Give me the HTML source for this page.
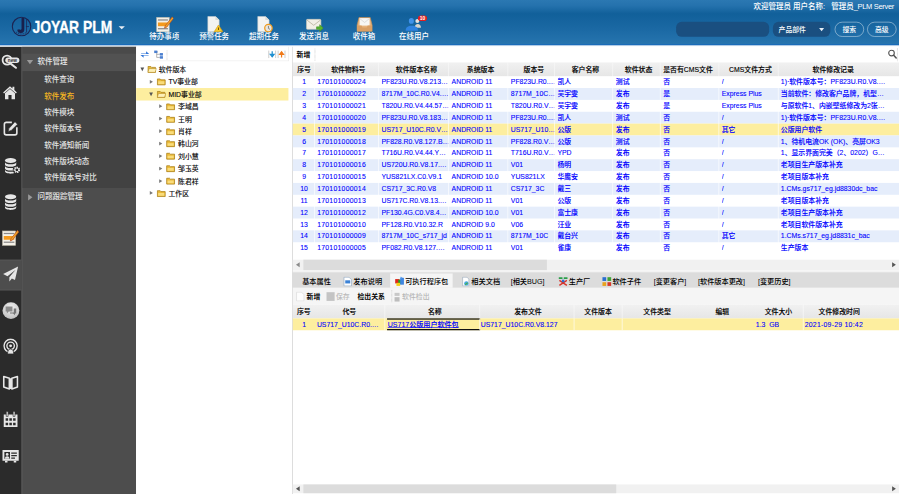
<!DOCTYPE html><html lang="zh-CN"><head><meta charset="utf-8"><title>JOYAR PLM</title><style>
*{box-sizing:border-box}
html,body{margin:0;padding:0;width:899px;height:494px;overflow:hidden;background:#fff}
#app{position:absolute;left:0;top:0;width:1440px;height:792px;transform:scale(0.624306);transform-origin:0 0;overflow:hidden;background:#fff;
 font-family:"Liberation Sans","Noto Sans CJK SC",sans-serif;font-size:12px;color:#000;font-weight:500}
.abs{position:absolute}
#hdr{position:absolute;left:0;top:0;width:1440px;height:73px;
 background:linear-gradient(to bottom,#2b78b2 0,#2572ad 9px,#11609a 22px,#1a68a3 45px,#2674ae 70px,#1a6bb8 70px,#1a6bb8 73px)}
#gap{position:absolute;left:0;top:73px;width:1440px;height:2px;background:#f7fafd}
#brand{position:absolute;left:52px;top:27px;-webkit-text-stroke:.5px #fff;height:34px;line-height:34px;font-size:27px;font-weight:bold;color:#fff;white-space:nowrap;transform:scaleX(.825);transform-origin:0 50%}
.tb{position:absolute;top:24px;width:80px;height:46px;color:#fff;text-align:center}
.tb svg{position:absolute;left:27px;top:2px}
.tb span{position:absolute;left:0;width:80px;top:28px;line-height:14px;font-size:12px}
#user{position:absolute;right:8px;top:3px;height:16px;line-height:16px;color:#fff;font-size:12px;white-space:nowrap}
.pill{position:absolute;top:35px;height:24px;border-radius:9px;background:#1a4f80}
.btn{position:absolute;top:35px;height:24px;width:47px;border-radius:12px;border:1px solid rgba(255,255,255,.65);color:#fff;text-align:center;line-height:22px;font-size:11px}
#icons{position:absolute;left:0;top:75px;width:35px;height:720px;background:#2b2b2b}
#menu{position:absolute;left:35px;top:75px;width:183px;height:720px;background:#4d4d4d;border-left:1px solid #5a5a5a;color:#e8e8e8}
.mh{position:absolute;left:0;width:182px;height:26px;line-height:25px;background:#525252;font-size:12px}
.mh i{position:absolute;left:7px;top:10px;width:0;height:0}
.mh span{position:absolute;left:24px}
.mi{position:absolute;left:35px;height:26px;line-height:26px;font-size:12px;white-space:nowrap}
#tree{position:absolute;left:218px;top:75px;width:245px;height:720px;background:#fff;font-size:11px;-webkit-text-stroke:.2px #000}
.tr{position:absolute;left:0;width:244px;height:20px;line-height:20px;white-space:nowrap}
.tr b{font-weight:normal;position:absolute;top:0}
.arr{position:absolute;width:0;height:0}
#main{position:absolute;left:468px;top:75px;width:972px;height:720px;background:#fff;border-left:1px solid #c9c9c9}
.gh{position:absolute;left:0;width:971px;height:22px;background:linear-gradient(#f1f1f1,#e6e6e6);font-size:11px;-webkit-text-stroke:.2px #000}
.gh span{position:absolute;top:0;width:140px;line-height:22px;text-align:center;white-space:nowrap}
.row{position:absolute;left:0;width:971px;height:19px;line-height:19px;font-size:11px;color:#0000ff;white-space:nowrap;-webkit-text-stroke:.15px #0000ff}
.row.alt{background:#e5edfb}
.row.sel{background:#fdee9f}
.row span{position:absolute;top:0;height:19px;overflow:hidden;text-overflow:ellipsis;white-space:nowrap}
.num{letter-spacing:.4px}
.sb{position:absolute;background:#f1f1f1}
.sb i{position:absolute;background:#dcdcdc}
.tab{position:absolute;top:0;height:25px;line-height:25px;font-size:11.5px;white-space:nowrap}
</style></head><body><div id="app">
<div id="hdr">
<svg class="abs" style="left:18px;top:26px" width="33" height="33" viewBox="0 0 33 33"><circle cx="16.5" cy="16.5" r="14.8" fill="none" stroke="#1c2452" stroke-width="1.8"/><path d="M16.5 3h4.400v18a5.600 5.600 0 0 1-11.200.6l3.200-.7a2.300 2.300 0 0 0 3.600-.5z" fill="#18204c"/><path d="M23.500 16.500h5M24.500 5v21" stroke="#1c2452" stroke-width="1.200" fill="none"/><path d="M8 25.5q8.500 6 17 0" stroke="#1c2452" stroke-width="1.6" stroke-dasharray="1.5 1.5" fill="none"/></svg>
<div id="brand">JOYAR PLM</div>
<div class="arr" style="left:190px;top:42px;border-left:5px solid transparent;border-right:5px solid transparent;border-top:5px solid #e8eef5"></div>
<div class="tb" style="left:223px"><svg width="28" height="26" viewBox="0 0 28 26"><rect x="1" y="2" width="20" height="23" fill="#f4f1e8" stroke="#c9c4b4" stroke-width="1"/><rect x="3" y="10" width="16" height="6" fill="#f39a1e"/><rect x="3" y="5" width="16" height="2" fill="#8a8a8a"/><rect x="3" y="19" width="16" height="2" fill="#8a8a8a"/><path d="M26 1l2 2.500-11 14-3.500 1.500 1-3.500z" fill="#f0a52a" stroke="#b5461a" stroke-width="1"/></svg><span>待办事项</span></div>
<div class="tb" style="left:303px"><svg width="28" height="26" viewBox="0 0 28 26"><path d="M3 0h12l6 6v19H3z" fill="#f3f3f1" stroke="#d5d5d0" stroke-width="1"/><path d="M15 0v6h6z" fill="#dcdcd8"/><path d="M20 14l7 11H13z" fill="#f7c92c" stroke="#d79b10" stroke-width="1"/><rect x="19.300" y="18" width="1.500" height="4" fill="#6b4a00"/></svg><span>预警任务</span></div>
<div class="tb" style="left:383px"><svg width="28" height="26" viewBox="0 0 28 26"><path d="M3 0h12l6 6v19H3z" fill="#f3f3f1" stroke="#d5d5d0" stroke-width="1"/><path d="M15 0v6h6z" fill="#dcdcd8"/><circle cx="20" cy="19" r="6" fill="#e8e6e0" stroke="#f09a1c" stroke-width="2"/><path d="M20 15.500v4l2.500 1.500" stroke="#666" stroke-width="1.200" fill="none"/></svg><span>超期任务</span></div>
<div class="tb" style="left:463px"><svg width="28" height="26" viewBox="0 0 28 26"><rect x="1" y="5" width="23" height="16" rx="1.500" fill="#f2efe6" stroke="#cfc9b8" stroke-width="1"/><path d="M1.500 6l11 8.500 11-8.500" fill="none" stroke="#b9b29e" stroke-width="1.300"/><path d="M17 17h5v-3.500l6 5.500-6 5.500V21h-5z" fill="#58b431" stroke="#3d8a1d" stroke-width=".8"/></svg><span>发送消息</span></div>
<div class="tb" style="left:543px"><svg width="28" height="26" viewBox="0 0 28 26"><path d="M5 2h18l3 12v10H2V14z" fill="#e7b47d" stroke="#c78f55" stroke-width="1"/><rect x="6" y="3" width="16" height="12" fill="#f7f7f5"/><path d="M6.500 4l7.500 6 7.500-6" fill="none" stroke="#cfcfcf" stroke-width="1"/><path d="M2 15h7l1.500 3h7l1.500-3h7v9H2z" fill="#d9a066"/></svg><span>收件箱</span></div>
<div class="tb" style="left:623px"><svg width="36" height="28" viewBox="0 0 36 28" style="overflow:visible"><ellipse cx="18.500" cy="7.700" rx="3.200" ry="3.300" fill="#e6e3de"/><path d="M14.300 18.500c0-4.500 2-6.200 4.900-6.200s5 1.700 5 6.200z" fill="#d8d4cc"/><ellipse cx="8.900" cy="7.600" rx="4" ry="4.600" fill="#3f92ea"/><path d="M-.2 23.200c0-5.500 3.500-7.800 9.800-7.800s9.900 2.300 9.900 7.800z" fill="#2f83e0"/><rect x="19.500" y="-1.200" width="14.500" height="9" rx="4.500" fill="#e21f1f"/><text x="26.800" y="6" font-size="8" font-weight="bold" fill="#fff" text-anchor="middle" font-family="Liberation Sans,sans-serif">10</text></svg><span>在线用户</span></div>
<div id="user">欢迎管理员&nbsp;用户名称:&nbsp;&nbsp;&nbsp;管理员<span style="letter-spacing:-.5px">_PLM Server</span></div>
<div class="pill" style="left:1083px;width:149px"></div>
<div class="pill" style="left:1238px;width:92px;color:#fff;line-height:24px;font-size:11px;padding-left:9px">产品部件<div class="arr" style="left:74px;top:10px;border-left:4px solid transparent;border-right:4px solid transparent;border-top:5px solid #e8eef5"></div></div>
<div class="btn" style="left:1337px">搜索</div><div class="btn" style="left:1389px">高级</div>
</div><div id="gap"></div>
<div id="icons">
<div class="abs" style="left:0;top:341px;width:35px;height:49px;background:#4d4d4d;border-top:1px solid #5c5c5c;border-bottom:1px solid #5c5c5c"></div>
<svg class="abs" style="left:2px;top:9px" width="32" height="28" viewBox="0 0 32 28"><circle cx="9.300" cy="12.300" r="7.200" fill="none" stroke="#e6e6e6" stroke-width="3"/><path d="M15 18l8.500 6.500" stroke="#e6e6e6" stroke-width="3.400" stroke-linecap="round"/><rect x="6.500" y="8.200" width="22.500" height="8.800" rx="4.400" fill="#e6e6e6"/><text x="17.800" y="15" font-size="7.500" font-weight="bold" text-anchor="middle" fill="#2b2b2b" font-family="Liberation Sans,sans-serif">new</text></svg>
<svg class="abs" style="left:3px;top:60px" width="26" height="26" viewBox="0 0 26 26"><path d="M2 13L13 3l4 3.600V4h3v5.300L24 13l-1.500 1.800L13 6.200 3.500 14.800z" fill="#e6e6e6"/><path d="M5 14.500l8-7 8 7V24h-5.500v-7h-5v7H5z" fill="#e6e6e6"/></svg>
<svg class="abs" style="left:4px;top:118px" width="26" height="26" viewBox="0 0 26 26"><path d="M15 3H6a3 3 0 0 0-3 3v14a3 3 0 0 0 3 3h14a3 3 0 0 0 3-3v-9" fill="none" stroke="#e6e6e6" stroke-width="2.600"/><path d="M20 2l4 4-10 10-5 1.500 1.500-5z" fill="#e6e6e6" stroke="#2b2b2b" stroke-width="1"/></svg>
<svg class="abs" style="left:6px;top:177px" width="28" height="28" viewBox="0 0 28 28"><ellipse cx="11" cy="5" rx="9" ry="4" fill="#e6e6e6"/><path d="M2 7.500c0 5 18 5 18 0v4c0 5-18 5-18 0z" fill="#e6e6e6"/><path d="M2 13.500c0 5 18 5 18 0v4c0 5-18 5-18 0z" fill="#e6e6e6"/><path d="M2 19.500c0 5 18 5 18 0v3c0 5-18 5-18 0z" fill="#e6e6e6"/><circle cx="21" cy="20" r="6.500" fill="#2b2b2b"/><circle cx="21" cy="20" r="4" fill="none" stroke="#e6e6e6" stroke-width="2.400" stroke-dasharray="2.200 1.400"/><circle cx="21" cy="20" r="3" fill="none" stroke="#e6e6e6" stroke-width="1.600"/></svg>
<svg class="abs" style="left:4px;top:235px" width="26" height="28" viewBox="0 0 26 28"><ellipse cx="13" cy="5" rx="9" ry="4" fill="#e6e6e6"/><path d="M4 7.500c0 5 18 5 18 0v4c0 5-18 5-18 0z" fill="#e6e6e6"/><path d="M4 13.500c0 5 18 5 18 0v4c0 5-18 5-18 0z" fill="#e6e6e6"/><path d="M4 19.500c0 5 18 5 18 0v3c0 5-18 5-18 0z" fill="#e6e6e6"/></svg>
<svg class="abs" style="left:3px;top:293px" width="28" height="26" viewBox="0 0 28 26"><rect x="1" y="2" width="21" height="23" fill="#f4f1e8" stroke="#bdb8a8" stroke-width="1"/><rect x="3" y="10" width="17" height="6" fill="#f39a1e"/><rect x="3" y="5" width="17" height="2" fill="#8a8a8a"/><rect x="3" y="19" width="17" height="2" fill="#8a8a8a"/><path d="M25 1l2 2.500-10 13-3.500 1.500 1-3.500z" fill="#f0a52a" stroke="#b5461a" stroke-width="1"/></svg>
<svg class="abs" style="left:4px;top:351px" width="26" height="26" viewBox="0 0 26 26"><path d="M25 1L1 13l7 3.500L21 6 11 18v7l4-5 5 2.500z" fill="#e6e6e6"/></svg>
<svg class="abs" style="left:3px;top:408px" width="29" height="29" viewBox="0 0 29 29"><defs><radialGradient id="g8" cx=".5" cy=".35" r=".7"><stop offset="0" stop-color="#f4f4f4"/><stop offset="1" stop-color="#bdbdbd"/></radialGradient></defs><circle cx="14.500" cy="14.500" r="13.500" fill="url(#g8)"/><path d="M6 8h11v8h-6l-3 3v-3H6z" fill="#8a8a8a"/><path d="M19 11h4v8h-2v3l-3-3h-5v-1.500h6z" fill="#777"/></svg>
<svg class="abs" style="left:4px;top:467px" width="26" height="26" viewBox="0 0 26 26"><circle cx="13" cy="12" r="10.500" fill="none" stroke="#e6e6e6" stroke-width="2.200"/><circle cx="13" cy="12" r="6" fill="none" stroke="#e6e6e6" stroke-width="2.200"/><circle cx="13" cy="12" r="2.300" fill="#e6e6e6"/><path d="M8 25c0-5 2-8 5-8s5 3 5 8z" fill="#e6e6e6" stroke="#2b2b2b" stroke-width="1.200"/></svg>
<svg class="abs" style="left:4px;top:524px" width="26" height="28" viewBox="0 0 26 28"><path d="M2 4l9 3v17l-9-3zM24 4l-9 3v17l9-3z" fill="none" stroke="#e6e6e6" stroke-width="2.600" stroke-linejoin="round"/><path d="M11 7h4v17h-4z" fill="#e6e6e6"/></svg>
<svg class="abs" style="left:4px;top:583px" width="26" height="28" viewBox="0 0 26 28"><path d="M2 6h22v20H2z" fill="#e6e6e6"/><path d="M6 1h3v8H6zM17 1h3v8h-3z" fill="#e6e6e6" stroke="#2b2b2b" stroke-width="1"/><path d="M5 12h4v4H5zM11 12h4v4h-4zM17 12h4v4h-4zM5 19h4v4H5zM11 19h4v4h-4zM17 19h4v4h-4z" fill="#2b2b2b"/></svg>
<svg class="abs" style="left:3px;top:642px" width="28" height="26" viewBox="0 0 28 26"><path d="M1 4h26v17H1z" fill="#e6e6e6"/><path d="M4 7h9v11H4z" fill="#2b2b2b"/><circle cx="8.500" cy="11" r="2.200" fill="#e6e6e6"/><path d="M5 18c0-3 1.500-4 3.500-4s3.500 1 3.500 4z" fill="#e6e6e6"/><path d="M15 8h9v2h-9zM15 12h9v2h-9zM15 16h6v2h-6z" fill="#2b2b2b"/><path d="M5 21h4v3H5zM19 21h4v3h-4z" fill="#e6e6e6"/></svg>
</div>
<div id="menu">
<div class="abs" style="left:0;top:0;width:182px;height:11px;background:#4a4a4a"></div>
<div class="mh" style="top:11px;height:28px"><i style="border-left:5px solid transparent;border-right:5px solid transparent;border-top:7px solid #9a9a9a"></i><span>软件管理</span></div>
<div class="abs" style="left:0;top:39px;width:182px;height:187px;background:#424242"></div>
<div class="mi" style="top:39.5px;color:#e4e4e4">软件查询</div>
<div class="mi" style="top:65.8px;color:#f5b523">软件发布</div>
<div class="mi" style="top:92.0px;color:#e4e4e4">软件模块</div>
<div class="mi" style="top:118.2px;color:#e4e4e4">软件版本号</div>
<div class="mi" style="top:144.5px;color:#e4e4e4">软件通知新闻</div>
<div class="mi" style="top:170.8px;color:#e4e4e4">软件版块动态</div>
<div class="mi" style="top:197.0px;color:#e4e4e4">软件版本号对比</div>
<div class="mh" style="top:227.500px;background:none"><i style="top:8px;left:9px;border-top:5px solid transparent;border-bottom:5px solid transparent;border-left:7px solid #9a9a9a"></i><span>问题跟踪管理</span></div>
</div>
<div id="tree">
<div class="abs" style="left:0;top:0;width:245px;height:23px;border-bottom:1px solid #ebebeb;border-right:1px solid #e6e6e6"></div>
<svg class="abs" style="left:6px;top:4px" width="16" height="16" viewBox="0 0 16 16"><path d="M2 6.500h8V3l5 4.500H2zM14 10H6v3.500L1 9h13z" fill="#2f74d8"/></svg>
<svg class="abs" style="left:28px;top:5px" width="18" height="16" viewBox="0 0 18 16"><path d="M2 3h5M5 3v9h5M5 7h5" stroke="#8a8a8a" stroke-width="1" fill="none"/><rect x="1" y="1" width="5" height="4" fill="#4a7fd0"/><rect x="10" y="5" width="5" height="4" fill="#4a7fd0"/><rect x="10" y="10" width="5" height="4" fill="#4a7fd0"/></svg>
<div class="abs" style="left:48.500px;top:3px;width:0;height:18px;border-left:1px dotted #b5b5b5"></div>
<svg class="abs" style="left:211px;top:5px" width="30" height="14" viewBox="0 0 30 14"><path d="M1.500 1v12M12.500 1v12M16.500 1v12M27.500 1v12" stroke="#b0b0b0" stroke-width="1"/><path d="M7 2v6M4 7l3 4 3-4z" stroke="#1e8fd0" stroke-width="2" fill="#1e8fd0"/><path d="M22 12V6M19 7l3-4 3 4z" stroke="#f07a1a" stroke-width="2" fill="#f07a1a"/></svg>
<div class="tr" style="top:26.3px">
<div class="arr" style="left:6.6px;top:7px;border-left:3.8px solid transparent;border-right:3.8px solid transparent;border-top:6px solid #555"></div>
<svg class="abs" style="left:18.3px;top:3px" width="15" height="13.5" viewBox="0 0 16 14"><path d="M1 2.500h5l1.500 1.500H14V12.500H1z" fill="#e6b93c" stroke="#a87c14" stroke-width="1.200"/><path d="M3 6h12.500l-2 6.500H1z" fill="#fdf0b8" stroke="#b88c20" stroke-width="1"/></svg>
<b style="left:36.3px">软件版本</b></div>
<div class="tr" style="top:46.2px">
<div class="arr" style="left:21.9px;top:6.5px;border-top:3.5px solid transparent;border-bottom:3.5px solid transparent;border-left:5.5px solid #777"></div>
<svg class="abs" style="left:33.1px;top:3px" width="15" height="13.5" viewBox="0 0 16 14"><path d="M1 2.500h5l1.500 1.500H14.500V12.500H1z" fill="#ecbc3a" stroke="#a87c14" stroke-width="1.300"/><path d="M2.500 6.500h10.500v4.500H2.500z" fill="#f9dc7c"/></svg>
<b style="left:51.8px">TV事业部</b></div>
<div class="tr" style="top:66.0px;background:#fdee9f">
<div class="arr" style="left:21.4px;top:7px;border-left:3.8px solid transparent;border-right:3.8px solid transparent;border-top:6px solid #555"></div>
<svg class="abs" style="left:33.1px;top:3px" width="15" height="13.5" viewBox="0 0 16 14"><path d="M1 2.500h5l1.500 1.500H14V12.500H1z" fill="#e6b93c" stroke="#a87c14" stroke-width="1.200"/><path d="M3 6h12.500l-2 6.500H1z" fill="#fdf0b8" stroke="#b88c20" stroke-width="1"/></svg>
<b style="left:51.8px">MID事业部</b></div>
<div class="tr" style="top:85.9px">
<div class="arr" style="left:36.8px;top:6.5px;border-top:3.5px solid transparent;border-bottom:3.5px solid transparent;border-left:5.5px solid #777"></div>
<svg class="abs" style="left:48.0px;top:3px" width="15" height="13.5" viewBox="0 0 16 14"><path d="M1 2.500h5l1.500 1.500H14.500V12.500H1z" fill="#ecbc3a" stroke="#a87c14" stroke-width="1.300"/><path d="M2.500 6.500h10.500v4.500H2.500z" fill="#f9dc7c"/></svg>
<b style="left:67.2px">李域昌</b></div>
<div class="tr" style="top:105.7px">
<div class="arr" style="left:36.8px;top:6.5px;border-top:3.5px solid transparent;border-bottom:3.5px solid transparent;border-left:5.5px solid #777"></div>
<svg class="abs" style="left:48.0px;top:3px" width="15" height="13.5" viewBox="0 0 16 14"><path d="M1 2.500h5l1.500 1.500H14.500V12.500H1z" fill="#ecbc3a" stroke="#a87c14" stroke-width="1.300"/><path d="M2.500 6.500h10.500v4.500H2.500z" fill="#f9dc7c"/></svg>
<b style="left:67.2px">王明</b></div>
<div class="tr" style="top:125.5px">
<div class="arr" style="left:36.8px;top:6.5px;border-top:3.5px solid transparent;border-bottom:3.5px solid transparent;border-left:5.5px solid #777"></div>
<svg class="abs" style="left:48.0px;top:3px" width="15" height="13.5" viewBox="0 0 16 14"><path d="M1 2.500h5l1.500 1.500H14.500V12.500H1z" fill="#ecbc3a" stroke="#a87c14" stroke-width="1.300"/><path d="M2.500 6.500h10.500v4.500H2.500z" fill="#f9dc7c"/></svg>
<b style="left:67.2px">肖祥</b></div>
<div class="tr" style="top:145.4px">
<div class="arr" style="left:36.8px;top:6.5px;border-top:3.5px solid transparent;border-bottom:3.5px solid transparent;border-left:5.5px solid #777"></div>
<svg class="abs" style="left:48.0px;top:3px" width="15" height="13.5" viewBox="0 0 16 14"><path d="M1 2.500h5l1.500 1.500H14.500V12.500H1z" fill="#ecbc3a" stroke="#a87c14" stroke-width="1.300"/><path d="M2.500 6.500h10.500v4.500H2.500z" fill="#f9dc7c"/></svg>
<b style="left:67.2px">韩山河</b></div>
<div class="tr" style="top:165.3px">
<div class="arr" style="left:36.8px;top:6.5px;border-top:3.5px solid transparent;border-bottom:3.5px solid transparent;border-left:5.5px solid #777"></div>
<svg class="abs" style="left:48.0px;top:3px" width="15" height="13.5" viewBox="0 0 16 14"><path d="M1 2.500h5l1.500 1.500H14.500V12.500H1z" fill="#ecbc3a" stroke="#a87c14" stroke-width="1.300"/><path d="M2.500 6.500h10.500v4.500H2.500z" fill="#f9dc7c"/></svg>
<b style="left:67.2px">刘小慧</b></div>
<div class="tr" style="top:185.1px">
<div class="arr" style="left:36.8px;top:6.5px;border-top:3.5px solid transparent;border-bottom:3.5px solid transparent;border-left:5.5px solid #777"></div>
<svg class="abs" style="left:48.0px;top:3px" width="15" height="13.5" viewBox="0 0 16 14"><path d="M1 2.500h5l1.500 1.500H14.500V12.500H1z" fill="#ecbc3a" stroke="#a87c14" stroke-width="1.300"/><path d="M2.500 6.500h10.500v4.500H2.500z" fill="#f9dc7c"/></svg>
<b style="left:67.2px">邹玉英</b></div>
<div class="tr" style="top:205.0px">
<div class="arr" style="left:36.8px;top:6.5px;border-top:3.5px solid transparent;border-bottom:3.5px solid transparent;border-left:5.5px solid #777"></div>
<svg class="abs" style="left:48.0px;top:3px" width="15" height="13.5" viewBox="0 0 16 14"><path d="M1 2.500h5l1.500 1.500H14.500V12.500H1z" fill="#ecbc3a" stroke="#a87c14" stroke-width="1.300"/><path d="M2.500 6.500h10.500v4.500H2.500z" fill="#f9dc7c"/></svg>
<b style="left:67.2px">陈君祥</b></div>
<div class="tr" style="top:224.8px">
<div class="arr" style="left:21.9px;top:6.5px;border-top:3.5px solid transparent;border-bottom:3.5px solid transparent;border-left:5.5px solid #777"></div>
<svg class="abs" style="left:33.1px;top:3px" width="15" height="13.5" viewBox="0 0 16 14"><path d="M1 2.500h5l1.500 1.500H14.500V12.500H1z" fill="#ecbc3a" stroke="#a87c14" stroke-width="1.300"/><path d="M2.500 6.500h10.500v4.500H2.500z" fill="#f9dc7c"/></svg>
<b style="left:51.8px">工作区</b></div>
</div>
<div class="abs" style="left:463px;top:75px;width:5px;height:720px;background:#fff"></div>
<div id="main">
<div class="abs" style="left:0;top:0;width:971px;height:25px;background:#fff"></div>
<div class="abs" style="left:6px;top:0;height:25px;line-height:25px;font-size:11px;font-weight:bold">新增</div>
<div class="abs" style="left:35px;top:3px;width:0;height:19px;border-left:1px dotted #b5b5b5"></div>
<svg class="abs" style="left:953px;top:4px" width="15" height="16" viewBox="0 0 15 16"><circle cx="6" cy="6" r="4.500" fill="none" stroke="#555" stroke-width="1.800"/><path d="M9.500 9.500l4 4.500" stroke="#555" stroke-width="2.400" stroke-linecap="round"/></svg>
<div class="abs" style="left:968px;top:2px;width:0;height:21px;border-left:1px dotted #b5b5b5"></div>
<div class="gh" style="top:25px">
<span style="left:-51.9px">序号</span>
<span style="left:18.9px">软件物料号</span>
<span style="left:128.0px">软件版本名称</span>
<span style="left:230.7px">系统版本</span>
<span style="left:316.2px">版本号</span>
<span style="left:398.7px">客户名称</span>
<span style="left:483.9px">软件状态</span>
<span style="left:563.0px">是否有CMS文件</span>
<span style="left:663.0px">CMS文件方式</span>
<span style="left:795.6px">软件修改记录</span>
<div class="abs" style="left:34.0px;top:0;width:1px;height:22px;background:#f8f8f8"></div>
<div class="abs" style="left:137.0px;top:0;width:1px;height:22px;background:#f8f8f8"></div>
<div class="abs" style="left:249.4px;top:0;width:1px;height:22px;background:#f8f8f8"></div>
<div class="abs" style="left:344.2px;top:0;width:1px;height:22px;background:#f8f8f8"></div>
<div class="abs" style="left:418.8px;top:0;width:1px;height:22px;background:#f8f8f8"></div>
<div class="abs" style="left:512.4px;top:0;width:1px;height:22px;background:#f8f8f8"></div>
<div class="abs" style="left:588.3px;top:0;width:1px;height:22px;background:#f8f8f8"></div>
<div class="abs" style="left:682.0px;top:0;width:1px;height:22px;background:#f8f8f8"></div>
<div class="abs" style="left:776.7px;top:0;width:1px;height:22px;background:#f8f8f8"></div>
</div>
<div class="row" style="top:47px">
<span style="left:3px;width:30px;text-align:center">1</span>
<span class="num" style="left:39.0px;width:100.0px">170101000024</span>
<span style="left:142.0px;width:109.4px">PF823U.R0.V8.213.R0.T</span>
<span style="left:254.4px;width:91.8px">ANDROID 11</span>
<span style="left:349.2px;width:71.6px">PF823U.R0.V8</span>
<span style="left:423.8px;width:90.6px">凯人</span>
<span style="left:517.4px;width:72.9px">测试</span>
<span style="left:593.3px;width:90.7px">否</span>
<span style="left:687.0px;width:91.7px">/</span>
<span style="left:781.7px;width:168.3px">1)·软件版本号：PF823U.R0.V8.213</span>
</div>
<div class="row alt" style="top:66px">
<span style="left:3px;width:30px;text-align:center">2</span>
<span class="num" style="left:39.0px;width:100.0px">170101000022</span>
<span style="left:142.0px;width:109.4px">8717M_10C.R0.V4.44.Y1</span>
<span style="left:254.4px;width:91.8px">ANDROID 11</span>
<span style="left:349.2px;width:71.6px">8717M_10C.R0</span>
<span style="left:423.8px;width:90.6px">吴宇雯</span>
<span style="left:517.4px;width:72.9px">发布</span>
<span style="left:593.3px;width:90.7px">是</span>
<span style="left:687.0px;width:91.7px">Express Plus</span>
<span style="left:781.7px;width:168.3px">当前软件：修改客户品牌，机型名称等</span>
</div>
<div class="row" style="top:85px">
<span style="left:3px;width:30px;text-align:center">3</span>
<span class="num" style="left:39.0px;width:100.0px">170101000021</span>
<span style="left:142.0px;width:109.4px">T820U.R0.V4.44.57.Y1</span>
<span style="left:254.4px;width:91.8px">ANDROID 11</span>
<span style="left:349.2px;width:71.6px">T820U.R0.V4.44</span>
<span style="left:423.8px;width:90.6px">吴宇雯</span>
<span style="left:517.4px;width:72.9px">发布</span>
<span style="left:593.3px;width:90.7px">是</span>
<span style="left:687.0px;width:91.7px">Express Plus</span>
<span style="left:781.7px;width:168.3px">与原软件1、内嵌壁纸修改为2张新壁纸</span>
</div>
<div class="row alt" style="top:104px">
<span style="left:3px;width:30px;text-align:center">4</span>
<span class="num" style="left:39.0px;width:100.0px">170101000020</span>
<span style="left:142.0px;width:109.4px">PF823U.R0.V8.183.R0.T</span>
<span style="left:254.4px;width:91.8px">ANDROID 11</span>
<span style="left:349.2px;width:71.6px">PF823U.R0.V8</span>
<span style="left:423.8px;width:90.6px">凯人</span>
<span style="left:517.4px;width:72.9px">测试</span>
<span style="left:593.3px;width:90.7px">否</span>
<span style="left:687.0px;width:91.7px">/</span>
<span style="left:781.7px;width:168.3px">1)·软件版本号：PF823U.R0.V8.183</span>
</div>
<div class="row sel" style="top:123px">
<span style="left:3px;width:30px;text-align:center">5</span>
<span class="num" style="left:39.0px;width:100.0px">170101000019</span>
<span style="left:142.0px;width:109.4px">US717_U10C.R0.V8.127</span>
<span style="left:254.4px;width:91.8px">ANDROID 11</span>
<span style="left:349.2px;width:71.6px">US717_U10C.R0</span>
<span style="left:423.8px;width:90.6px">公版</span>
<span style="left:517.4px;width:72.9px">发布</span>
<span style="left:593.3px;width:90.7px">否</span>
<span style="left:687.0px;width:91.7px">其它</span>
<span style="left:781.7px;width:168.3px">公版用户软件</span>
</div>
<div class="row alt" style="top:142px">
<span style="left:3px;width:30px;text-align:center">6</span>
<span class="num" style="left:39.0px;width:100.0px">170101000018</span>
<span style="left:142.0px;width:109.4px">PF828.R0.V8.127.B1.T</span>
<span style="left:254.4px;width:91.8px">ANDROID 11</span>
<span style="left:349.2px;width:71.6px">PF828.R0.V8.127</span>
<span style="left:423.8px;width:90.6px">公版</span>
<span style="left:517.4px;width:72.9px">测试</span>
<span style="left:593.3px;width:90.7px">否</span>
<span style="left:687.0px;width:91.7px">/</span>
<span style="left:781.7px;width:168.3px">1、待机电流OK (OK)、亮屏OK3</span>
</div>
<div class="row" style="top:161px">
<span style="left:3px;width:30px;text-align:center">7</span>
<span class="num" style="left:39.0px;width:100.0px">170101000017</span>
<span style="left:142.0px;width:109.4px">T716U.R0.V4.44.Y1.T5</span>
<span style="left:254.4px;width:91.8px">ANDROID 11</span>
<span style="left:349.2px;width:71.6px">T716U.R0.V4.44</span>
<span style="left:423.8px;width:90.6px">YPD</span>
<span style="left:517.4px;width:72.9px">发布</span>
<span style="left:593.3px;width:90.7px">否</span>
<span style="left:687.0px;width:91.7px">/</span>
<span style="left:781.7px;width:168.3px">1、显示界面完美（2、0202）GMS</span>
</div>
<div class="row alt" style="top:180px">
<span style="left:3px;width:30px;text-align:center">8</span>
<span class="num" style="left:39.0px;width:100.0px">170101000016</span>
<span style="left:142.0px;width:109.4px">US720U.R0.V8.17.B2.T1</span>
<span style="left:254.4px;width:91.8px">ANDROID 11</span>
<span style="left:349.2px;width:71.6px">V01</span>
<span style="left:423.8px;width:90.6px">杨明</span>
<span style="left:517.4px;width:72.9px">发布</span>
<span style="left:593.3px;width:90.7px">否</span>
<span style="left:687.0px;width:91.7px">/</span>
<span style="left:781.7px;width:168.3px">老项目生产版本补充</span>
</div>
<div class="row" style="top:199px">
<span style="left:3px;width:30px;text-align:center">9</span>
<span class="num" style="left:39.0px;width:100.0px">170101000015</span>
<span style="left:142.0px;width:109.4px">YUS821LX.C0.V9.1</span>
<span style="left:254.4px;width:91.8px">ANDROID 10.0</span>
<span style="left:349.2px;width:71.6px">YUS821LX</span>
<span style="left:423.8px;width:90.6px">华鹰安</span>
<span style="left:517.4px;width:72.9px">发布</span>
<span style="left:593.3px;width:90.7px">否</span>
<span style="left:687.0px;width:91.7px">/</span>
<span style="left:781.7px;width:168.3px">老项目版本补充</span>
</div>
<div class="row alt" style="top:218px">
<span style="left:3px;width:30px;text-align:center">10</span>
<span class="num" style="left:39.0px;width:100.0px">170101000014</span>
<span style="left:142.0px;width:109.4px">CS717_3C.R0.V8</span>
<span style="left:254.4px;width:91.8px">ANDROID 11</span>
<span style="left:349.2px;width:71.6px">CS717_3C</span>
<span style="left:423.8px;width:90.6px">戴三</span>
<span style="left:517.4px;width:72.9px">发布</span>
<span style="left:593.3px;width:90.7px">否</span>
<span style="left:687.0px;width:91.7px">/</span>
<span style="left:781.7px;width:168.3px">1.CMs.gs717_eg.jd8830dc_bac</span>
</div>
<div class="row" style="top:237px">
<span style="left:3px;width:30px;text-align:center">11</span>
<span class="num" style="left:39.0px;width:100.0px">170101000013</span>
<span style="left:142.0px;width:109.4px">US717C.R0.V8.13.B1.T2</span>
<span style="left:254.4px;width:91.8px">ANDROID 11</span>
<span style="left:349.2px;width:71.6px">V01</span>
<span style="left:423.8px;width:90.6px">公版</span>
<span style="left:517.4px;width:72.9px">发布</span>
<span style="left:593.3px;width:90.7px">否</span>
<span style="left:687.0px;width:91.7px">/</span>
<span style="left:781.7px;width:168.3px">老项目版本补充</span>
</div>
<div class="row alt" style="top:256px">
<span style="left:3px;width:30px;text-align:center">12</span>
<span class="num" style="left:39.0px;width:100.0px">170101000012</span>
<span style="left:142.0px;width:109.4px">PF130.4G.C0.V8.40.R2</span>
<span style="left:254.4px;width:91.8px">ANDROID 10.0</span>
<span style="left:349.2px;width:71.6px">V01</span>
<span style="left:423.8px;width:90.6px">富士康</span>
<span style="left:517.4px;width:72.9px">发布</span>
<span style="left:593.3px;width:90.7px">否</span>
<span style="left:687.0px;width:91.7px">/</span>
<span style="left:781.7px;width:168.3px">老项目生产版本补充</span>
</div>
<div class="row" style="top:275px">
<span style="left:3px;width:30px;text-align:center">13</span>
<span class="num" style="left:39.0px;width:100.0px">170101000010</span>
<span style="left:142.0px;width:109.4px">PF128.R0.V10.32.R</span>
<span style="left:254.4px;width:91.8px">ANDROID 9.0</span>
<span style="left:349.2px;width:71.6px">V06</span>
<span style="left:423.8px;width:90.6px">汪业</span>
<span style="left:517.4px;width:72.9px">发布</span>
<span style="left:593.3px;width:90.7px">否</span>
<span style="left:687.0px;width:91.7px">/</span>
<span style="left:781.7px;width:168.3px">老项目软件版本补充</span>
</div>
<div class="row alt" style="top:294px">
<span style="left:3px;width:30px;text-align:center">14</span>
<span class="num" style="left:39.0px;width:100.0px">170101000009</span>
<span style="left:142.0px;width:109.4px">8717M_10C_s717_jd</span>
<span style="left:254.4px;width:91.8px">ANDROID 11</span>
<span style="left:349.2px;width:71.6px">8717M_10C</span>
<span style="left:423.8px;width:90.6px">戴台兴</span>
<span style="left:517.4px;width:72.9px">发布</span>
<span style="left:593.3px;width:90.7px">否</span>
<span style="left:687.0px;width:91.7px">其它</span>
<span style="left:781.7px;width:168.3px">1.CMs.s717_eg.jd8831c_bac</span>
</div>
<div class="row" style="top:313px">
<span style="left:3px;width:30px;text-align:center">15</span>
<span class="num" style="left:39.0px;width:100.0px">170101000005</span>
<span style="left:142.0px;width:109.4px">PF082.R0.V8.127.R1.T</span>
<span style="left:254.4px;width:91.8px">ANDROID 11</span>
<span style="left:349.2px;width:71.6px">V01</span>
<span style="left:423.8px;width:90.6px">雀康</span>
<span style="left:517.4px;width:72.9px">发布</span>
<span style="left:593.3px;width:90.7px">否</span>
<span style="left:687.0px;width:91.7px">/</span>
<span style="left:781.7px;width:168.3px">生产版本</span>
</div>
<div class="abs" style="left:34.0px;top:47px;width:1px;height:285px;background:#fff"></div>
<div class="abs" style="left:137.0px;top:47px;width:1px;height:285px;background:#fff"></div>
<div class="abs" style="left:249.4px;top:47px;width:1px;height:285px;background:#fff"></div>
<div class="abs" style="left:344.2px;top:47px;width:1px;height:285px;background:#fff"></div>
<div class="abs" style="left:418.8px;top:47px;width:1px;height:285px;background:#fff"></div>
<div class="abs" style="left:512.4px;top:47px;width:1px;height:285px;background:#fff"></div>
<div class="abs" style="left:588.3px;top:47px;width:1px;height:285px;background:#fff"></div>
<div class="abs" style="left:682.0px;top:47px;width:1px;height:285px;background:#fff"></div>
<div class="abs" style="left:776.7px;top:47px;width:1px;height:285px;background:#fff"></div>
<div class="sb" style="left:0;top:341px;width:971px;height:17px"><i style="left:17px;top:0;width:390px;height:17px"></i><div class="arr" style="left:5px;top:4px;border-top:4px solid transparent;border-bottom:4px solid transparent;border-right:6px solid #8a8a8a"></div><div class="arr" style="left:960px;top:4px;border-top:4px solid transparent;border-bottom:4px solid transparent;border-left:6px solid #555"></div></div>
<div class="abs" style="left:0;top:358px;width:971px;height:3px;background:#f3f3f3"></div>
<div class="abs" style="left:0;top:361px;width:971px;height:25px;background:#dcdcdc"></div>
<div class="abs" style="left:156px;top:363px;width:100px;height:23px;background:#f5f5f5"></div>
<div class="tab" style="left:15px;top:364px">基本属性</div>
<svg class="abs" style="left:80px;top:368px" width="16" height="16" viewBox="0 0 16 16"><path d="M2 1h8l4 4v10H2z" fill="#fff" stroke="#8ea6c4" stroke-width="1"/><rect x="4" y="6" width="8" height="5" fill="#3b82d6"/></svg><div class="tab" style="left:97px;top:364px">发布说明</div>
<svg class="abs" style="left:163px;top:368px" width="16" height="16" viewBox="0 0 16 16"><rect x="1" y="4" width="7" height="7" fill="#e0261c"/><rect x="6" y="5" width="6" height="7" fill="#1fa32a"/><rect x="3" y="10" width="6" height="5" fill="#f2d21a"/><rect x="9" y="2" width="6" height="11" fill="#3f86e0"/><path d="M9 0l4 1-3 3z" fill="#6aa6ee"/></svg><div class="tab" style="left:180px;top:364px">可执行程序包</div>
<svg class="abs" style="left:269px;top:368px" width="16" height="16" viewBox="0 0 16 16"><path d="M3 1h7l3 3v11H3z" fill="#fff" stroke="#9ab" stroke-width="1"/><circle cx="9" cy="11" r="3.500" fill="#46a8e0"/><path d="M7 13l4-3" stroke="#4caf50" stroke-width="2"/></svg><div class="tab" style="left:286px;top:364px">相关文档</div>
<div class="tab" style="left:349px;top:364px">[相关BUG]</div>
<svg class="abs" style="left:425px;top:368px" width="16" height="16" viewBox="0 0 16 16"><path d="M1 1h6v3H1zM9 1h6v3H9z" fill="#2a9d4a"/><path d="M2 6l12 8M14 6L2 14" stroke="#d8342a" stroke-width="2.200"/><rect x="6" y="5" width="4" height="4" fill="#2b6fd0"/></svg><div class="tab" style="left:442px;top:364px">生产厂</div>
<svg class="abs" style="left:495px;top:368px" width="16" height="16" viewBox="0 0 16 16"><rect x="1" y="1" width="6" height="6" fill="#2b6fd0"/><rect x="9" y="1" width="6" height="6" fill="#3da335"/><rect x="1" y="9" width="6" height="6" fill="#e8a21e"/><rect x="9" y="9" width="6" height="6" fill="#d63a2a"/></svg><div class="tab" style="left:512px;top:364px">软件子件</div>
<div class="tab" style="left:578px;top:364px">[变更客户]</div>
<div class="tab" style="left:649px;top:364px">[软件版本更改]</div>
<div class="tab" style="left:745px;top:364px">[变更历史]</div>
<div class="abs" style="left:0;top:386px;width:971px;height:27px;background:#f5f5f5"></div>
<svg class="abs" style="left:5px;top:392px" width="14" height="16" viewBox="0 0 14 16"><path d="M1 1h8l4 4v10H1z" fill="#fdfdfd" stroke="#d8d8d8" stroke-width="1"/></svg>
<div class="tab" style="left:22px;top:388px;font-weight:bold;font-size:11px">新增</div>
<svg class="abs" style="left:53px;top:392px" width="15" height="16" viewBox="0 0 15 16"><rect x="1" y="1" width="13" height="14" fill="#c4c4c4"/></svg>
<div class="tab" style="left:69px;top:388px;color:#b9b9b9;font-size:11px">保存</div>
<div class="tab" style="left:103.500px;top:388px;font-weight:bold;font-size:11px">检出关系</div>
<div class="abs" style="left:158px;top:390px;width:0;height:19px;border-left:1px dotted #b5b5b5"></div>
<svg class="abs" style="left:161px;top:393px" width="12" height="16" viewBox="0 0 12 16"><rect x="2" y="1" width="8" height="5" fill="#c8c8c8"/><rect x="2" y="8" width="8" height="7" fill="#bdbdbd"/></svg>
<div class="tab" style="left:175px;top:388px;color:#b5b5b5;font-size:11px">软件检出</div>
<div class="gh" style="top:413px">
<span style="left:-52.4px">序号</span>
<span style="left:20.5px">代号</span>
<span style="left:157.5px">名称</span>
<span style="left:306.7px">发布文件</span>
<span style="left:418.9px">文件版本</span>
<span style="left:513.4px">文件类型</span>
<span style="left:618.0px">编辑</span>
<span style="left:707.8px">文件大小</span>
<span style="left:805.2px">文件修改时间</span>
<div class="abs" style="left:147.4px;top:0;width:1px;height:22px;background:#fafafa"></div>
<div class="abs" style="left:299.4px;top:0;width:1px;height:22px;background:#fafafa"></div>
<div class="abs" style="left:449.5px;top:0;width:1px;height:22px;background:#fafafa"></div>
<div class="abs" style="left:526.7px;top:0;width:1px;height:22px;background:#fafafa"></div>
<div class="abs" style="left:817.4px;top:0;width:1px;height:22px;background:#fafafa"></div>
</div>
<div class="row sel" style="top:435px">
<span style="left:3px;width:30px;text-align:center">1</span>
<span style="left:38.6px;width:106px">US717_U10C.R0.V8.127</span>
<span style="left:151.0px;width:149px;height:19px;border-top:2px solid #111;border-bottom:2px solid #111;line-height:15px;padding-left:1px;text-decoration:underline;font-size:11.300px">US717公版用户软件包</span>
<span style="left:301.0px;width:146px">US717_U10C.R0.V8.127</span>
<span style="left:719.0px;width:60px;text-align:right">1.3&nbsp; GB</span>
<span class="num" style="left:820.0px;width:140px">2021-09-29 10:42</span>
<div class="abs" style="left:147.4px;top:0;width:1px;height:19px;background:#fff"></div>
<div class="abs" style="left:299.4px;top:0;width:1px;height:19px;background:#fff"></div>
<div class="abs" style="left:449.5px;top:0;width:1px;height:19px;background:#fff"></div>
<div class="abs" style="left:526.7px;top:0;width:1px;height:19px;background:#fff"></div>
<div class="abs" style="left:817.4px;top:0;width:1px;height:19px;background:#fff"></div>
</div>
<div class="sb" style="left:0;top:700.500px;width:971px;height:14px"><i style="left:17px;top:0;width:501px;height:14px"></i><div class="arr" style="left:5px;top:3px;border-top:4px solid transparent;border-bottom:4px solid transparent;border-right:6px solid #555"></div><div class="arr" style="left:960px;top:3px;border-top:4px solid transparent;border-bottom:4px solid transparent;border-left:6px solid #555"></div></div>
</div>
</div></body></html>
